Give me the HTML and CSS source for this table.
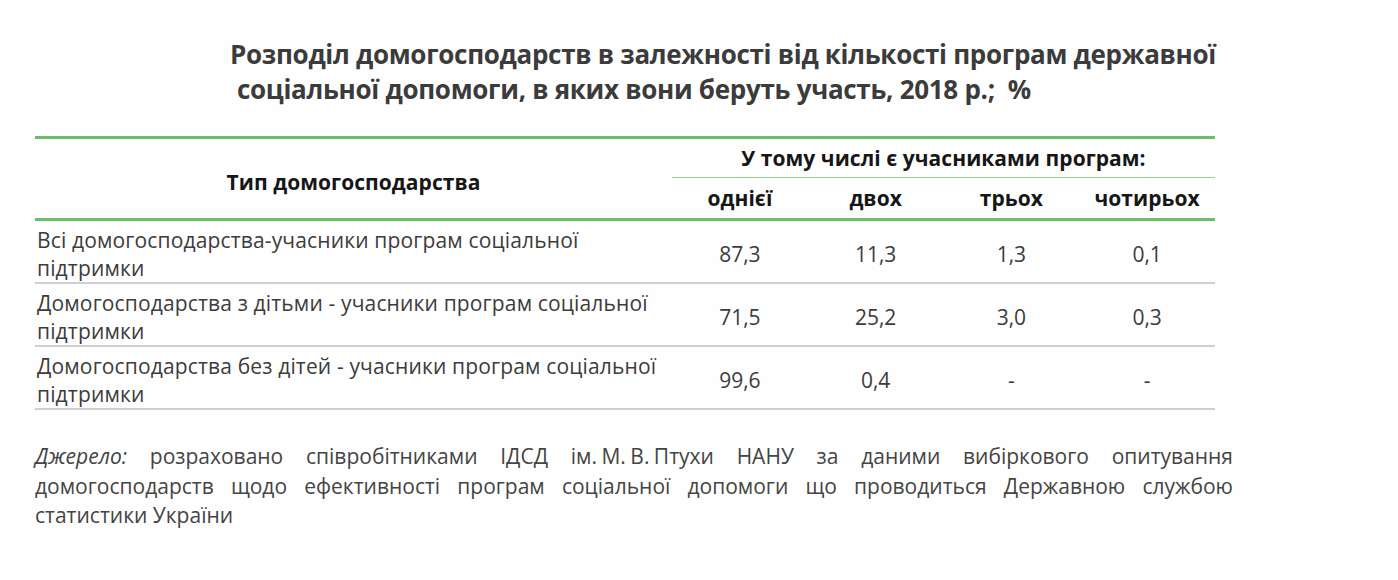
FILE: index.html
```html
<!DOCTYPE html>
<html lang="uk">
<head>
<meta charset="utf-8">
<title>Розподіл домогосподарств</title>
<link rel="stylesheet" href="styles.css">
</head>
<body>
<div class="page">
  <h1 class="title">
    <span class="title-line">Розподіл домогосподарств в залежності від кількості програм державної</span>
    <span class="title-line second">соціальної допомоги, в яких вони беруть участь, 2018 р.;&nbsp; %</span>
  </h1>
  <table class="data">
    <colgroup>
      <col class="c-type">
      <col class="c-num">
      <col class="c-num">
      <col class="c-num">
      <col class="c-num">
    </colgroup>
    <thead>
      <tr class="h1">
        <th class="type" rowspan="2">Тип домогосподарства</th>
        <th class="group" colspan="4"><span class="group-text">У тому числі є учасниками програм:</span></th>
      </tr>
      <tr class="h2">
        <th>однієї</th>
        <th>двох</th>
        <th>трьох</th>
        <th>чотирьох</th>
      </tr>
    </thead>
    <tbody>
      <tr>
        <td class="label">Всі домогосподарства-учасники програм соціальної<br>підтримки</td>
        <td>87,3</td><td>11,3</td><td>1,3</td><td>0,1</td>
      </tr>
      <tr>
        <td class="label">Домогосподарства з дітьми - учасники програм соціальної<br>підтримки</td>
        <td>71,5</td><td>25,2</td><td>3,0</td><td>0,3</td>
      </tr>
      <tr>
        <td class="label">Домогосподарства без дітей - учасники програм соціальної<br>підтримки</td>
        <td>99,6</td><td>0,4</td><td>-</td><td>-</td>
      </tr>
    </tbody>
  </table>
  <div class="source">
    <p class="source-line"><em>Джерело:</em> розраховано співробітниками ІДСД <span class="keep">ім. М. В. Птухи</span> НАНУ за даними вибіркового опитування</p>
    <p class="source-line">домогосподарств щодо ефективності програм соціальної допомоги що проводиться Державною службою</p>
    <p class="source-line last">статистики України</p>
  </div>
</div>
</body>
</html>
```
FILE: styles.css
```css
* { box-sizing: border-box; }
html, body {
  margin: 0;
  padding: 0;
  background: #fefefe;
}
body {
  font-family: "Open Sans", "Noto Sans", sans-serif;
  color: #3a3a3a;
}
.page {
  padding: 37px 0 0 35px;
  width: 1398px;
}
.title {
  margin: 0 0 0 195px;
  font-size: 26px;
  line-height: 35px;
  font-weight: 700;
  color: #3b3b3b;
  letter-spacing: -0.3px;
}
.title-line { display: block; white-space: nowrap; }
.title-line.second { padding-left: 7px; }

.data {
  margin-top: 29px;
  width: 1180px;
  border-collapse: separate;
  border-spacing: 0;
  table-layout: fixed;
  font-size: 21px;
}
.c-type { width: 637px; }
.c-num { width: 135.75px; }

.data th {
  font-weight: 700;
  color: #161616;
  padding: 0;
  text-align: center;
  font-size: 21px;
  letter-spacing: 0.05px;
}
.h1 th { border-top: 3px solid #6cbd6a; }
.data th.type {
  border-bottom: 3px solid #6cbd6a;
  vertical-align: middle;
  padding-top: 6px;
}
.data th.group {
  height: 42px;
  border-bottom: 1px solid #8fd18d;
  vertical-align: middle;
}
.h2 th {
  height: 43px;
  border-bottom: 3px solid #6cbd6a;
  vertical-align: middle;
}
.data td {
  height: 63px;
  padding: 5px 0 0;
  border-bottom: 2px solid #cfcfcf;
  text-align: center;
  vertical-align: middle;
  line-height: 28px;
  color: #3c3c3c;
  letter-spacing: 0;
}
.data td.label {
  text-align: left;
  padding-left: 2px;
  vertical-align: top;
  letter-spacing: 0.15px;
}
.source {
  margin-top: 32px;
  width: 1198px;
  font-size: 21px;
  line-height: 29.5px;
  color: #444;
}
.source-line {
  margin: 0;
  text-align: justify;
  text-align-last: justify;
  white-space: nowrap;
}
.source-line.last {
  text-align-last: left;
}
.keep {
  display: inline-block;
  word-spacing: -1px;
}
.source em { font-style: italic; }
```
